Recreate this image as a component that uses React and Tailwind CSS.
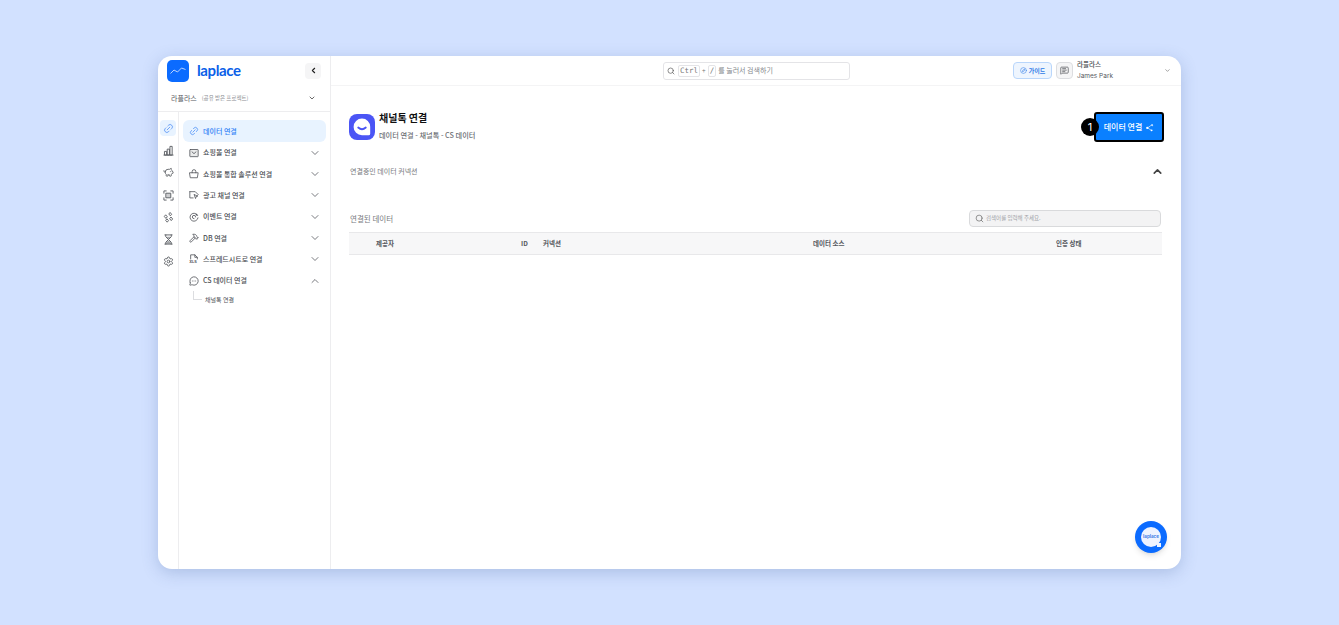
import React from 'react'
import { ChevronDown, ChevronUp, ChevronLeft, Search, Link2, PiggyBank, Settings, Hammer, MessageCircleMore, Compass, MessageSquareText } from 'lucide-react'

const font = { fontFamily: '"Noto Sans CJK KR", Inter, sans-serif' }

function Svg({ className, children }) {
  return (
    <svg viewBox="0 0 12 12" fill="none" stroke="currentColor" strokeWidth="1" strokeLinecap="round" strokeLinejoin="round" className={className}>
      {children}
    </svg>
  )
}

const BarsIcon = (p) => (
  <Svg {...p}>
    <path d="M1 11h10" />
    <rect x="2" y="7" width="2" height="4" />
    <rect x="5" y="4.5" width="2" height="6.5" />
    <rect x="8" y="1.5" width="2" height="9.5" />
  </Svg>
)
const ScanIcon = (p) => (
  <Svg {...p}>
    <path d="M1 3.5V1h2.5M8.5 1H11v2.5M11 8.5V11H8.5M3.5 11H1V8.5" />
    <rect x="3.5" y="3.5" width="5" height="5" fill="currentColor" fillOpacity=".3" />
  </Svg>
)
const DiamondsIcon = (p) => (
  <Svg {...p}>
    <path d="M8 .8l1.4 1.7L8 4.2 6.6 2.5zM3.2 3.4l1.5 1.8-1.5 1.8-1.5-1.8zM9 5.8l1.5 1.8L9 9.4 7.5 7.6zM4.6 7.8L6 9.4l-1.4 1.7-1.4-1.7z" />
  </Svg>
)
const GlassIcon = (p) => (
  <Svg {...p}>
    <path d="M2 1h8M2 11h8M3 1v2l3 3 3-3V1M3 11V9l3-3 3 3v2" />
    <path d="M3.6 3h4.8L6 5.4zM3.4 10.5V9.2L6 7l2.6 2.2v1.3z" fill="currentColor" fillOpacity=".55" stroke="none" />
  </Svg>
)
const BoxIcon = (p) => (
  <Svg {...p}>
    <rect x="1" y="1.8" width="10" height="8.6" rx="0.6" fill="currentColor" fillOpacity=".12" />
    <path d="M3.6 4.6L6 6.8l2.4-2.2" />
  </Svg>
)
const BagIcon = (p) => (
  <Svg {...p}>
    <path d="M1 4.5h10L10 10.5H2z" />
    <path d="M3.8 4.5V3a2.2 2.2 0 0 1 4.4 0v1.5" />
  </Svg>
)
const FlagIcon = (p) => (
  <Svg {...p}>
    <path d="M1 2h6.5L11 5.5 9.5 7M1 2v7.5h4" />
    <path d="M6.5 5.5l3.8 2-1.7.5-.6 1.8z" />
  </Svg>
)
const EventIcon = (p) => (
  <Svg {...p}>
    <path d="M10.4 4.2A4.8 4.8 0 1 0 10.8 7" />
    <path d="M8 6a2 2 0 1 0-2 2" />
    <circle cx="9" cy="3.2" r="1" fill="currentColor" stroke="none" />
  </Svg>
)
const XlsIcon = (p) => (
  <Svg {...p}>
    <path d="M2 6V1h5l3 3v2M7 1v3h3" />
    <text x="0.3" y="11" fontSize="4.6" fontWeight="700" fill="currentColor" stroke="none" fontFamily="Inter, sans-serif">XLS</text>
  </Svg>
)
const SparkShareIcon = (p) => (
  <Svg {...p}>
    <path d="M3.5 6.5L9 2.5M3.5 6.5L8 9.5" strokeWidth=".8" />
    <circle cx="3" cy="6.5" r="1.5" fill="currentColor" stroke="none" />
    <path d="M9.5 1l.6 1.2 1.2.6-1.2.6-.6 1.2-.6-1.2-1.2-.6 1.2-.6z" fill="currentColor" stroke="none" />
    <circle cx="8.8" cy="9.8" r="1.3" fill="currentColor" stroke="none" />
  </Svg>
)

const railIcons = [BarsIcon, PiggyBank, ScanIcon, DiamondsIcon, GlassIcon, Settings]

const navItems = [
  { label: '쇼핑몰 연결', icon: BoxIcon },
  { label: '쇼핑몰 통합 솔루션 연결', icon: BagIcon },
  { label: '광고 채널 연결', icon: FlagIcon },
  { label: '이벤트 연결', icon: EventIcon },
  { label: 'DB 연결', icon: Hammer },
  { label: '스프레드시트로 연결', icon: XlsIcon },
]

function NavRow({ label, icon: Icon, open }) {
  const Chevron = open ? ChevronUp : ChevronDown
  return (
    <div className="flex items-center h-[21.35px] pl-[6px] pr-[5px]">
      <Icon className="w-[10px] h-[10px] text-[#55585e] shrink-0" />
      <span className="ml-[4px] text-[7px] font-medium text-[#4b4e54] leading-none">{label}</span>
      <Chevron className="ml-auto w-[12px] h-[12px] text-[#55585e]" strokeWidth={1.6} />
    </div>
  )
}

function Sidebar() {
  return (
    <aside className="w-[173px] shrink-0 flex flex-col border-r border-[#ededef]">
      <div className="h-[56px] shrink-0 border-b border-[#ededef] px-[9px] pt-[4px]">
        <div className="flex items-center h-[21px]">
          <div className="w-[22px] h-[22px] rounded-[5px] bg-[#0b6bff] flex items-center justify-center">
            <svg width="16" height="9" viewBox="0 0 16 9" fill="none" stroke="#cfe0ff" strokeWidth="0.9">
              <path d="M0.5 7.5 L4 4 L7.5 6 L11.5 2 L15.5 3.5" />
            </svg>
          </div>
          <span className="ml-[8px] text-[15px] font-bold text-[#0b5fe8] leading-none tracking-[-0.4px]" style={{ fontFamily: 'Lato, sans-serif' }}>laplace</span>
          <div className="ml-auto w-[16px] h-[16px] rounded-[4px] bg-[#f5f5f6] flex items-center justify-center">
            <ChevronLeft className="w-[9px] h-[9px] text-[#222]" strokeWidth={3} />
          </div>
        </div>
        <div className="flex items-center mt-[13px] pl-[4px] pr-[5px]">
          <span className="text-[7px] text-[#55585e] leading-none">라플라스</span>
          <span className="ml-[5px] mt-[1px] text-[5.5px] text-[#8a8d92] leading-none">(공유 받은 프로젝트)</span>
          <ChevronDown className="ml-auto w-[8px] h-[8px] text-[#444]" strokeWidth={2.4} />
        </div>
      </div>
      <div className="flex flex-1">
        <div className="w-[21px] shrink-0 border-r border-[#ededef] flex flex-col items-center pt-[8px]">
          <div className="w-[16px] h-[16px] rounded-[4px] bg-[#e8f3ff] flex items-center justify-center">
            <Link2 className="w-[11px] h-[11px] text-[#4c8cf5] -rotate-45" strokeWidth={1.6} />
          </div>
          <div className="flex flex-col items-center gap-[11.3px] mt-[9px]">
            {railIcons.map((Icon, i) => (
              <Icon key={i} className="w-[11px] h-[11px] text-[#5a5d62]" strokeWidth={1.9} />
            ))}
          </div>
        </div>
        <div className="flex-1 pl-[4px] pr-[4px] pt-[8px]">
          <div className="flex items-center h-[22px] rounded-[6px] bg-[#e8f3ff] pl-[6px]">
            <Link2 className="w-[10px] h-[10px] text-[#3b86f7] -rotate-45" strokeWidth={1.6} />
            <span className="ml-[4px] text-[7px] font-medium text-[#2f80f6] leading-none">데이터 연결</span>
          </div>
          <div>
            {navItems.map((item) => (
              <NavRow key={item.label} {...item} />
            ))}
            <NavRow label="CS 데이터 연결" icon={MessageCircleMore} open />
          </div>
          <div className="flex h-[19px] pl-[10px]">
            <div className="w-[9px] h-[9px] border-l border-b border-[#dcdde0]" />
            <span className="ml-[3px] mt-[6px] text-[6px] text-[#55585e] leading-none">채널톡 연결</span>
          </div>
        </div>
      </div>
    </aside>
  )
}

function TopBar() {
  return (
    <header className="h-[30px] shrink-0 border-b border-[#f4f4f5] flex items-center">
      <div className="ml-[332px] w-[187px] h-[18px] rounded-[3px] border border-[#e4e4e7] flex items-center pl-[3px]">
        <Search className="w-[8px] h-[8px] text-[#555]" strokeWidth={2} />
        <span className="ml-[3px] px-[1px] border border-[#e4e4e7] rounded-[2px] text-[7.5px] leading-[10px] text-[#777]" style={{ fontFamily: '"DejaVu Sans Mono", monospace' }}>Ctrl</span>
        <span className="mx-[2px] text-[6.5px] text-[#777] leading-none">+</span>
        <span className="px-[1px] border border-[#e4e4e7] rounded-[2px] text-[7.5px] leading-[10px] text-[#777]" style={{ fontFamily: '"DejaVu Sans Mono", monospace' }}>/</span>
        <span className="ml-[2px] text-[7px] text-[#85888d] leading-none">를 눌러서 검색하기</span>
      </div>
      <div className="ml-auto flex items-center mr-[10px]">
        <div className="w-[39px] h-[17px] rounded-[4px] border border-[#b9d6fb] bg-[#eef5fe] flex items-center justify-center gap-[2px]">
          <Compass className="w-[7px] h-[7px] text-[#3f86ea]" strokeWidth={2} />
          <span className="text-[6px] font-bold text-[#2f7be6] leading-none">가이드</span>
        </div>
        <div className="ml-[4px] w-[17px] h-[17px] rounded-[4px] border border-[#dcdde0] bg-[#f5f5f6] flex items-center justify-center">
          <MessageSquareText className="w-[9px] h-[9px] text-[#55585e]" strokeWidth={2} />
        </div>
        <div className="ml-[4px] w-[87px] flex flex-col gap-[3px] mt-[-1px]">
          <span className="text-[6.5px] font-medium text-[#44474c] leading-[8px]">라플라스</span>
          <span className="text-[6.5px] text-[#55585e] leading-[8px] mt-[1px]" style={{ fontFamily: 'Inter, sans-serif' }}>James Park</span>
        </div>
        <ChevronDown className="w-[7px] h-[7px] text-[#666]" strokeWidth={2} />
      </div>
    </header>
  )
}

function ChannelIcon() {
  return (
    <div className="w-[26px] h-[26px] rounded-[8px] bg-[#4b55f5] flex items-center justify-center">
      <svg width="20" height="20" viewBox="0 0 20 20">
        <path d="M10 1.5 a8.2 8.2 0 0 1 8.2 8.2 v7 a1.6 1.6 0 0 1 -1.6 1.6 h-6.6 a8.4 8.4 0 0 1 0 -16.8 z" fill="#fff" />
        <path d="M6.2 10.5 q3.8 3.4 7.6 0" fill="none" stroke="#4b55f5" strokeWidth="1.8" strokeLinecap="round" />
      </svg>
    </div>
  )
}

function MainArea() {
  return (
    <main className="flex-1 flex flex-col relative min-w-0">
      <div className="pl-[18px] pr-[17px] pt-[26px] flex-1">
        <div className="flex items-start justify-between">
          <div className="flex items-center mt-[2px]">
            <ChannelIcon />
            <div className="ml-[4px]">
              <div className="text-[10px] font-bold text-[#111] leading-[12px] mt-[-2px]">채널톡 연결</div>
              <div className="mt-[7px] text-[7.2px] font-medium text-[#6d7075] leading-[9px]">데이터 연결 - 채널톡 - CS 데이터</div>
            </div>
          </div>
          <div className="relative">
            <div className="w-[70px] h-[30px] rounded-[3px] bg-[#0a80ff] border-2 border-black flex items-center justify-center gap-[3px]">
              <span className="text-[8px] font-medium text-white leading-none">데이터 연결</span>
              <SparkShareIcon className="w-[9px] h-[9px] text-white" />
            </div>
            <div className="absolute left-[-13px] top-[6px] w-[18px] h-[18px] rounded-full bg-black flex items-center justify-center text-white text-[11px] leading-none" style={{ fontFamily: 'Inter, sans-serif' }}>1</div>
          </div>
        </div>

        <div className="flex items-center justify-between mt-[17px] pl-[1px] h-[24px]">
          <span className="text-[7px] text-[#77797e] leading-none">연결중인 데이터 커넥션</span>
          <ChevronUp className="w-[13px] h-[13px] text-[#444]" strokeWidth={3} />
        </div>

        <div className="flex items-center justify-between mt-[27px] pl-[1px] pr-[3px]">
          <span className="text-[7.5px] text-[#77797e] leading-none">연결된 데이터</span>
          <div className="w-[192px] h-[17px] rounded-[4px] border border-[#d9dadc] bg-[#f3f3f4] flex items-center pl-[5px]">
            <Search className="w-[9px] h-[9px] text-[#666]" strokeWidth={1.8} />
            <span className="ml-[2px] text-[5.5px] text-[#a0a2a6] leading-none">검색어를 입력해 주세요.</span>
          </div>
        </div>

        <div className="mt-[5px] h-[23px] w-[813px] bg-[#f7f7f8] border-t border-b border-[#e8e8ea] flex items-center text-[6.5px] font-bold text-[#55585e] leading-none">
          <span className="ml-[27px] w-[145px]">제공자</span>
          <span className="w-[22px]">ID</span>
          <span className="w-[270px]">커넥션</span>
          <span className="w-[243px]">데이터 소스</span>
          <span>인증 상태</span>
        </div>
      </div>

      <div className="absolute right-[14px] bottom-[16px] w-[32px] h-[32px] rounded-full bg-[#0b6bff] flex items-center justify-center shadow-md">
        <div className="relative w-[20px] h-[20px] rounded-full bg-[#eef3ff] flex items-center justify-center">
          <span className="text-[4.5px] font-bold text-[#3f7de6] leading-none" style={{ fontFamily: 'Inter, sans-serif' }}>laplace</span>
          <div className="absolute right-0 bottom-0 w-[4px] h-[4px] bg-[#eef3ff]" />
        </div>
      </div>
    </main>
  )
}

export default function App() {
  return (
    <div className="w-[1339px] h-[625px] bg-[#d2e1ff] pt-[56px] pl-[158px] overflow-hidden" style={font}>
      <div className="w-[1023px] h-[513px] bg-white rounded-[14px] shadow-[0_4px_16px_rgba(60,90,150,0.25)] flex overflow-hidden">
        <Sidebar />
        <div className="flex-1 flex flex-col min-w-0">
          <TopBar />
          <MainArea />
        </div>
      </div>
    </div>
  )
}
